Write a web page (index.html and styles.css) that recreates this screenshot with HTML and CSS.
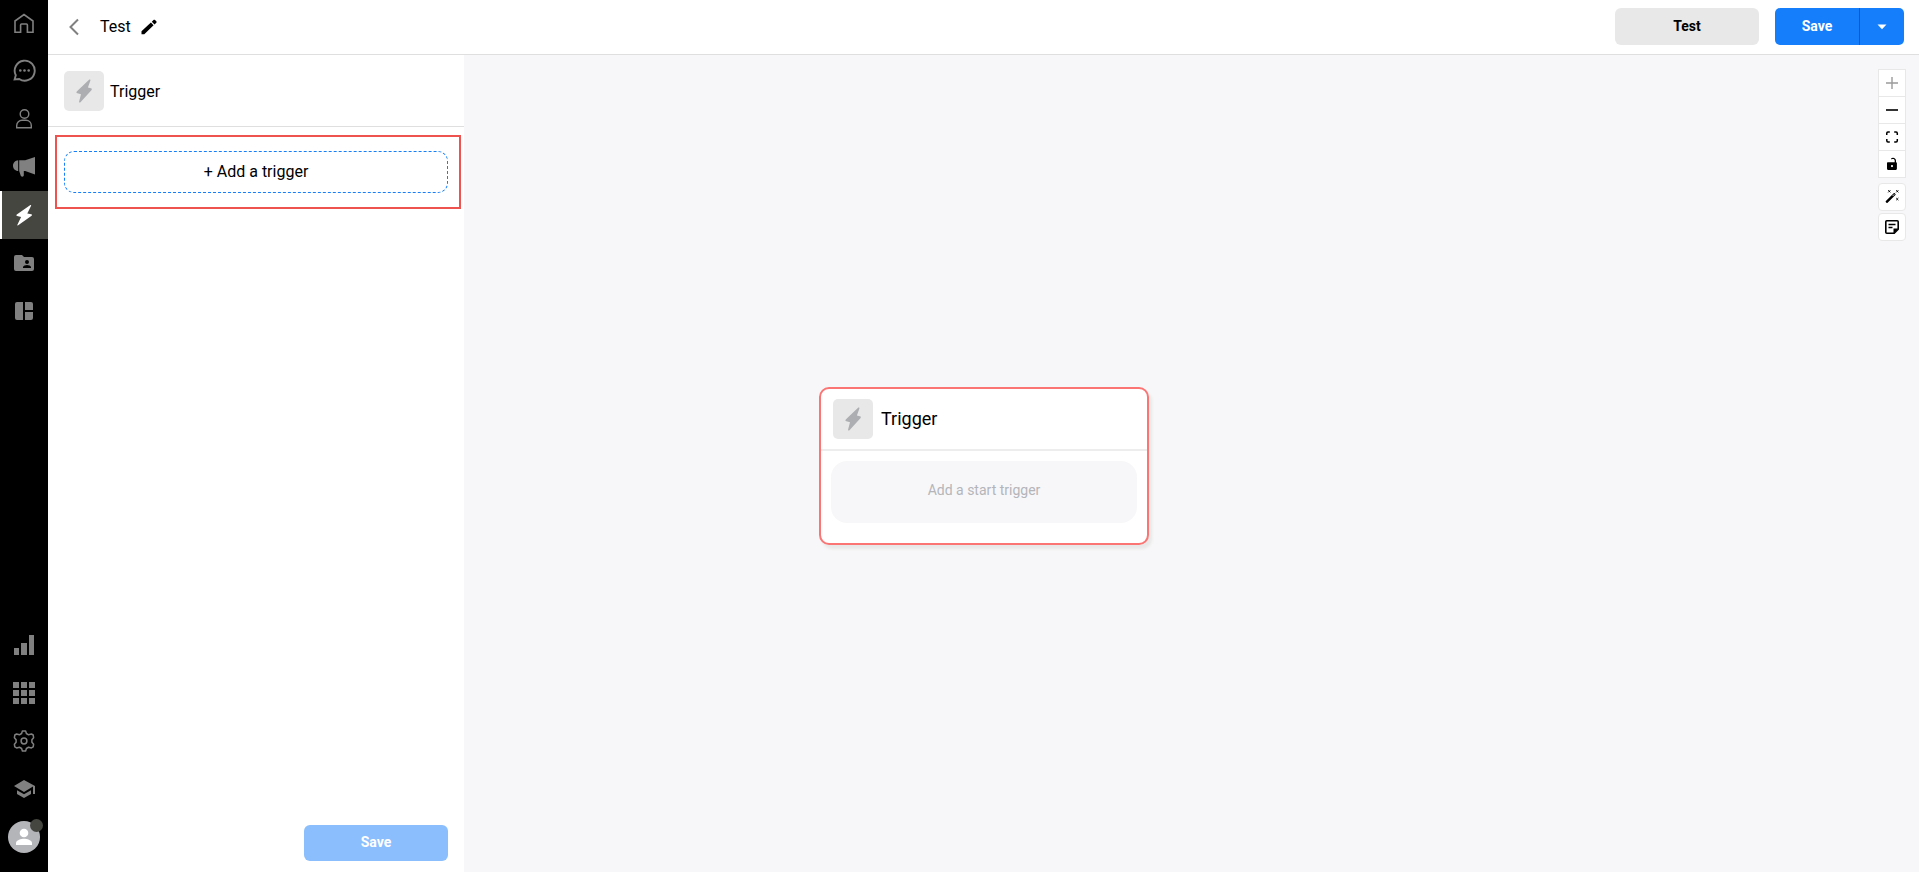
FILE: index.html
```
<!DOCTYPE html>
<html lang="en">
<head>
    <meta charset="UTF-8" />
    <meta name="viewport" content="width=device-width, initial-scale=1.0" />
    <title>Test</title>
    <link rel="stylesheet" href="styles.css">
</head>
<body>
    <nav class="sidebar">
        <div class="nav-group">
            <a class="nav-item" href="#" aria-label="Home">
                <svg width="24" height="24" viewBox="0 0 24 24" fill="none" stroke="currentColor" stroke-width="1.6"><path d="M3 21.2V10L12 3.500l9 6.500v11.200h-5.600V14a1 1 0 0 0-1-1H9.600a1 1 0 0 0-1 1v7.200z"/></svg>
            </a>
            <a class="nav-item" href="#" aria-label="Chat">
                <svg width="24" height="24" viewBox="0 0 24 24" fill="none" stroke="currentColor" stroke-width="1.900"><path d="M2.600 20.500l1.200-4.300A10 10 0 1 1 7.200 20z"/><g fill="currentColor" stroke="none"><circle cx="8.300" cy="11.500" r="1.300"/><circle cx="12.500" cy="11.500" r="1.300"/><circle cx="16.700" cy="11.500" r="1.300"/></g></svg>
            </a>
            <a class="nav-item" href="#" aria-label="Contacts">
                <svg width="24" height="24" viewBox="0 0 24 24" fill="none" stroke="currentColor" stroke-width="1.400"><circle cx="12.500" cy="7" r="4.300"/><path d="M4.700 20.800v-2.300c0-3.200 2.600-5.300 5.300-5.300h4c2.800 0 5.300 2.100 5.300 5.300v2.300z"/></svg>
            </a>
            <a class="nav-item" href="#" aria-label="Broadcasts">
                <svg width="24" height="24" viewBox="0 0 24 24" fill="currentColor"><path d="M6.200 5.300v10.800C3.200 15.800 1 13.600 1 10.700s2.200-5.100 5.200-5.400zM7.200 5.300h6L23 2v17.400l-9.800-3.500h-1.400v4.200c0 1-.6 1.600-1.500 1.600s-1.500-.6-1.800-1.600l-1.300-4z"/></svg>
            </a>
            <a class="nav-item active" href="#" aria-label="Workflows">
                <svg width="24" height="24" viewBox="0 0 24 24" fill="currentColor"><path d="M18.400 2.100 4.800 11.500c-.7.500-.4 1.400.4 1.600l3.900 1-3.700 7.600c-.3.700.2 1 .8.600l13.400-9.600c.7-.5.500-1.300-.3-1.500l-4-.6 3.800-7.900c.3-.6-.2-.9-.7-.6z"/></svg>
            </a>
            <a class="nav-item" href="#" aria-label="Files">
                <svg width="24" height="24" viewBox="0 0 24 24"><path fill="currentColor" d="M4 4h6l2 2h8a2 2 0 0 1 2 2v10a2 2 0 0 1-2 2H4a2 2 0 0 1-2-2V6a2 2 0 0 1 2-2z"/><path fill="#000" d="M15 9a2 2 0 1 1 0 4 2 2 0 0 1 0-4zm-4 8v-1c0-1.300 2.700-2 4-2s4 .7 4 2v1z"/></svg>
            </a>
            <a class="nav-item" href="#" aria-label="Dashboard">
                <svg width="24" height="24" viewBox="0 0 24 24" fill="currentColor"><path d="M11 3v18H5a2 2 0 0 1-2-2V5a2 2 0 0 1 2-2zM13 3h6a2 2 0 0 1 2 2v6h-8zM13 13h8v6a2 2 0 0 1-2 2h-6z"/></svg>
            </a>
        </div>
        <div class="nav-group">
            <a class="nav-item" href="#" aria-label="Reports">
                <svg width="24" height="24" viewBox="0 0 24 24" fill="currentColor"><path d="M2 15h5v7H2zM9 10h6v12H9zM17 2h5v20h-5z"/></svg>
            </a>
            <a class="nav-item" href="#" aria-label="Apps">
                <svg width="24" height="24" viewBox="0 0 24 24" fill="currentColor"><path d="M1 1h6v6H1zM9 1h6v6H9zM17 1h6v6h-6zM1 9h6v6H1zM9 9h6v6H9zM17 9h6v6h-6zM1 17h6v6H1zM9 17h6v6H9zM17 17h6v6h-6z"/></svg>
            </a>
            <a class="nav-item" href="#" aria-label="Settings">
                <svg width="24" height="24" viewBox="0 0 24 24" fill="none" stroke="currentColor" stroke-width="1.500" stroke-linejoin="round"><path d="M10.400 1.900h3.200l.8 2.600 2.200 1.300 2.800-.8 1.800 1 .4 2.700-1.700 2v2.600l1.700 2-.4 2.600-1.800 1-2.800-.7-2.200 1.300-.8 2.600h-3.200l-.8-2.600-2.200-1.300-2.800.7-1.800-1-.4-2.600 1.700-2v-2.600l-1.700-2L2.800 6l1.800-1 2.800.8 2.200-1.300z"/><circle cx="12" cy="12" r="2.900"/></svg>
            </a>
            <a class="nav-item" href="#" aria-label="Academy">
                <svg width="24" height="24" viewBox="0 0 24 24" fill="currentColor"><path d="M12 3 2 9l10 6 9-5.400V17h2V9z"/><path d="M5 13.200V17l7 4 7-4v-3.800l-7 4z"/></svg>
            </a>
            <a class="nav-item" href="#" aria-label="Profile">
                <span class="avatar">
                    <svg width="32" height="32" viewBox="0 0 32 32" fill="#fff"><circle cx="16" cy="12" r="4.300"/><path d="M8 24v-2c0-2.800 5.300-4.200 8-4.200s8 1.400 8 4.200v2z"/></svg>
                    <span class="status"></span>
                </span>
            </a>
        </div>
    </nav>

    <div class="main">
        <header class="topbar">
            <button class="icon-btn back" aria-label="Back">
                <svg width="16" height="18" viewBox="0 0 16 18" fill="none" stroke="#808080" stroke-width="2"><path d="M13 1.500 5.500 9l7.500 7.500"/></svg>
            </button>
            <h1 class="title">Test</h1>
            <button class="icon-btn" aria-label="Rename">
                <svg width="16" height="16" viewBox="0 0 16 16"><path d="M.5 12.300 9.900 3.500l2.700 2.700L3.300 15.300H.5zM10.800 2.700 12.500 1c.5-.5 1-.5 1.500 0l1.300 1.300c.5.500.5 1 0 1.500l-1.800 1.700z"/></svg>
            </button>
            <div class="actions">
                <button class="btn btn-grey">Test</button>
                <div class="split">
                    <button class="btn btn-save">Save</button>
                    <button class="btn btn-more" aria-label="More save options">
                        <svg width="10" height="6" viewBox="0 0 10 6" fill="#fff"><path d="M.5.500h9L5 5.300z"/></svg>
                    </button>
                </div>
            </div>
        </header>

        <div class="content">
            <aside class="panel">
                <div class="panel-head">
                    <span class="bolt">
                        <svg width="18" height="24" viewBox="0 0 18 24"><path d="M13.800.9 2 12.300c-.9.900-.7 1.700.4 2l3.600 1-1.900 7.100c-.2 1.100.7 1.500 1.600.5L16.400 11.200c.8-.9.600-1.700-.5-1.900l-3-.7 2.500-7c.3-1.100-.7-1.500-1.600-.7z"/></svg>
                    </span>
                    <h2 class="panel-title">Trigger</h2>
                </div>
                <div class="highlight">
                    <button class="add-trigger">+ Add a trigger</button>
                </div>
                <div class="panel-foot">
                    <button class="btn btn-blue" disabled>Save</button>
                </div>
            </aside>

            <main class="canvas">
                <section class="node">
                    <div class="node-head">
                        <span class="bolt">
                            <svg width="18" height="24" viewBox="0 0 18 24"><path d="M13.800.9 2 12.300c-.9.900-.7 1.700.4 2l3.600 1-1.900 7.100c-.2 1.100.7 1.500 1.600.5L16.400 11.200c.8-.9.600-1.700-.5-1.900l-3-.7 2.500-7c.3-1.100-.7-1.500-1.600-.7z"/></svg>
                        </span>
                        <h2 class="node-title">Trigger</h2>
                    </div>
                    <p class="node-empty">Add a start trigger</p>
                </section>

                <div class="tools">
                    <div class="zoom-tools">
                        <button class="tool" aria-label="Zoom in" disabled>
                            <svg width="14" height="14" viewBox="0 0 14 14" stroke="#9b9b9b" stroke-width="1.400"><path d="M7 1v12M1 7h12"/></svg>
                        </button>
                        <button class="tool" aria-label="Zoom out">
                            <svg width="14" height="14" viewBox="0 0 14 14" stroke="#000" stroke-width="1.600"><path d="M1 7h12"/></svg>
                        </button>
                        <button class="tool" aria-label="Fit view">
                            <svg width="14" height="14" viewBox="0 0 14 14" fill="none" stroke="#000" stroke-width="1.500"><path d="M1.750 5V3.200c0-.8.400-1.200 1.200-1.200H4.800M9.200 2h1.900c.8 0 1.200.4 1.200 1.200V5M12.300 9v1.800c0 .8-.4 1.200-1.200 1.200H9.200M4.800 12H3c-.8 0-1.200-.4-1.200-1.200V9"/></svg>
                        </button>
                        <button class="tool" aria-label="Lock">
                            <svg width="14" height="14" viewBox="0 0 14 14"><path fill-rule="evenodd" d="M3 5.300h6.700V3.800c0-1-.7-1.700-1.700-1.700-.6 0-1 .1-1.300.4L6 1.400C6.500.9 7.200.7 8 .7c1.800 0 3 1.300 3 3.100v1.500c.6.100.9.500.9 1v5.200c0 .9-.5 1.500-1.400 1.500H3.400C2.500 13 2 12.400 2 11.500V6.300c0-.6.400-1 1-1zM7 8a1.100 1.100 0 1 0 0 2.200A1.100 1.100 0 0 0 7 8z"/></svg>
                        </button>
                    </div>
                    <button class="tool tool-single" aria-label="Auto arrange">
                        <svg width="16" height="16" viewBox="0 0 16 16"><path d="m1.900 12.100 7.800-7.800c.4-.4.700-.4 1.100 0l.6.600c.4.400.4.700 0 1.100l-7.800 7.800c-.4.400-.7.400-1.100 0l-.6-.6c-.4-.4-.4-.7 0-1.100z"/><path d="m8.600 7 1.700-1.700" stroke="#fff" stroke-width=".9"/><path d="m4.200 1.200 2.200 2.200M6.400 1.200 4.200 3.400M12.200 1.200l2.200 2.200M14.400 1.200l-2.200 2.200M12.200 9l2.200 2.200M14.400 9l-2.200 2.200" stroke="#000" stroke-width=".9"/></svg>
                    </button>
                    <button class="tool tool-single" aria-label="Add note">
                        <svg width="16" height="16" viewBox="0 0 16 16" fill="none" stroke="#000" stroke-width="1.600"><path d="M2.800 1.800h10.400c.6 0 1 .4 1 1v7.400l-4 4H2.800c-.6 0-1-.4-1-1V2.800c0-.6.400-1 1-1zM4.500 5.500h7M4.500 8.500h4"/><path fill="#000" stroke="none" d="M9.500 14.500v-5h5z"/></svg>
                    </button>
                </div>
            </main>
        </div>
    </div>
</body>
</html>
```

FILE: styles.css
```
* {
    box-sizing: border-box;
}

body {
    margin: 0;
    height: 100vh;
    display: flex;
    font-family: Roboto, "Liberation Sans", sans-serif;
    font-size: 16px;
    color: #000;
    background-color: #fff;
}

h1, h2, p {
    margin: 0;
    font-weight: 400;
}

svg {
    display: block;
}

button {
    font-family: inherit;
    padding: 0;
    border: none;
    cursor: pointer;
}

/* left navigation */
.sidebar {
    width: 48px;
    flex-shrink: 0;
    display: flex;
    flex-direction: column;
    justify-content: space-between;
    margin-top: -1px;
    padding-bottom: 11px;
    background-color: #000;
}

.nav-item {
    display: flex;
    align-items: center;
    justify-content: center;
    height: 48px;
    color: #808080;
}

.nav-item.active {
    color: #fff;
    background-color: #464641;
    box-shadow: inset 2px 0 #fff;
}

.avatar {
    position: relative;
    border-radius: 50%;
    background-color: #b4b5b9;
}

.status {
    position: absolute;
    top: -2px;
    right: -3px;
    width: 13px;
    height: 13px;
    border-radius: 50%;
    background-color: #464641;
}

.main {
    flex: 1;
    min-width: 0;
    display: flex;
    flex-direction: column;
}

/* top bar */
.topbar {
    display: flex;
    align-items: center;
    height: 55px;
    padding: 0 15px 1px 17px;
    border-bottom: 1px solid #dfdfdf;
}

.icon-btn {
    background: none;
}

.back {
    margin-right: 19px;
}

.title {
    font-size: 16px;
    margin-right: 10px;
}

.actions {
    display: flex;
    gap: 16px;
    margin-left: auto;
}

.btn {
    height: 36px;
    padding-bottom: 2px;
    font-size: 14px;
    font-weight: 700;
    border-radius: 6px;
}

.actions .btn {
    height: 37px;
}

.btn-grey {
    width: 144px;
    color: #000;
    background-color: #e8e8e8;
}

.split {
    display: flex;
}

.btn-save,
.btn-more {
    color: #fff;
    background-color: #157efb;
}

.btn-save {
    width: 84px;
    border-radius: 5px 0 0 5px;
}

.btn-more {
    display: flex;
    align-items: center;
    justify-content: center;
    width: 45px;
    padding-bottom: 0;
    border-left: 1px solid #0f5ab4;
    border-radius: 0 5px 5px 0;
}

.content {
    flex: 1;
    display: flex;
}

/* trigger panel */
.panel {
    width: 416px;
    flex-shrink: 0;
    display: flex;
    flex-direction: column;
}

.panel-head {
    display: flex;
    align-items: center;
    gap: 6px;
    padding: 16px 16px 15px;
    border-bottom: 1px solid #dfdfdf;
}

.bolt {
    display: flex;
    align-items: center;
    justify-content: center;
    width: 40px;
    height: 40px;
    border-radius: 5px;
    background-color: #e8e8e8;
    fill: #adaeb1;
}

.panel-title {
    font-size: 16px;
}

.highlight {
    margin: 8px 3px 0 7px;
    padding: 14px 11px 14px 7px;
    border: 2px solid #ef5350;
}

.add-trigger {
    display: block;
    width: 100%;
    height: 42px;
    padding-bottom: 2px;
    font-size: 16px;
    color: #000;
    background-color: #fff;
    border: 1px dashed #157efb;
    border-radius: 10px;
}

.panel-foot {
    display: flex;
    justify-content: flex-end;
    margin-top: auto;
    padding: 0 16px 11px;
}

.btn-blue {
    width: 144px;
    color: #fff;
    background-color: #8abefd;
}

/* flow canvas */
.canvas {
    position: relative;
    flex: 1;
    background-color: #f7f7f9;
}

.node {
    position: absolute;
    left: 355px;
    top: 332px;
    width: 330px;
    padding-bottom: 20px;
    background-color: #fff;
    border: 2px solid #fb7575;
    border-radius: 10px;
    box-shadow: 3px 4px 3px #e8e8e8;
}

.node-head {
    display: flex;
    align-items: center;
    gap: 8px;
    padding: 10px 12px;
    border-bottom: 2px solid #ededed;
}

.node-title {
    padding-bottom: 2px;
    font-size: 18px;
}

.node-empty {
    margin: 10px 10px 0;
    padding: 19px 0 23px;
    font-size: 14px;
    line-height: 20px;
    text-align: center;
    color: #b4b5b9;
    background-color: #f7f7f9;
    border-radius: 16px;
}

.tools {
    position: absolute;
    top: 14px;
    right: 13px;
    width: 28px;
    display: flex;
    flex-direction: column;
    gap: 2px;
}

.zoom-tools {
    margin-bottom: 3px;
    border: 1px solid #e8e8e8;
    border-top: none;
}

.tool {
    display: flex;
    align-items: center;
    justify-content: center;
    width: 100%;
    height: 27px;
    background-color: #fff;
    border-top: 1px solid #e8e8e8;
}

.tool-single {
    height: 28px;
    border: 1px solid #e8e8e8;
    border-radius: 4px;
}
```
